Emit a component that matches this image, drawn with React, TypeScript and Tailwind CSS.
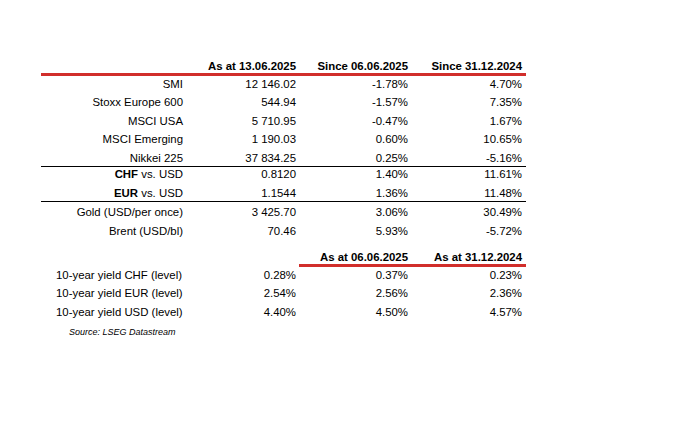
const rowsA = [
  { label: 'SMI', v: '12 146.02', w: '-1.78%', y: '4.70%' },
  { label: 'Stoxx Europe 600', v: '544.94', w: '-1.57%', y: '7.35%' },
  { label: 'MSCI USA', v: '5 710.95', w: '-0.47%', y: '1.67%' },
  { label: 'MSCI Emerging', v: '1 190.03', w: '0.60%', y: '10.65%' },
  { label: 'Nikkei 225', v: '37 834.25', w: '0.25%', y: '-5.16%' },
]

const rowsB = [
  { cur: 'CHF', v: '0.8120', w: '1.40%', y: '11.61%' },
  { cur: 'EUR', v: '1.1544', w: '1.36%', y: '11.48%' },
]

const rowsC = [
  { label: 'Gold (USD/per once)', v: '3 425.70', w: '3.06%', y: '30.49%' },
  { label: 'Brent (USD/bl)', v: '70.46', w: '5.93%', y: '-5.72%' },
]

const yields = [
  { label: '10-year yield CHF (level)', v: '0.28%', w: '0.37%', y: '0.23%' },
  { label: '10-year yield EUR (level)', v: '2.54%', w: '2.56%', y: '2.36%' },
  { label: '10-year yield USD (level)', v: '4.40%', w: '4.50%', y: '4.57%' },
]

const grid = 'grid grid-cols-[142px_113px_112px_118px]'

function Row({
  label,
  v,
  w,
  y,
  last = false,
  left = false,
}: {
  label: React.ReactNode
  v: string
  w: string
  y: string
  last?: boolean
  left?: boolean
}) {
  return (
    <div className={`${grid} ${last ? 'h-[16.5px] border-b border-black' : 'h-[18.5px]'} pt-[2.5px] leading-[11px]`}>
      <div className={left ? 'pl-[15px] text-left' : 'text-right'}>{label}</div>
      <div className="text-right">{v}</div>
      <div className="text-right">{w}</div>
      <div className="pr-[4px] text-right">{y}</div>
    </div>
  )
}

export default function App() {
  return (
    <div className="h-[438px] w-[680px] bg-white pt-[59px] font-['Liberation_Sans',Arial,sans-serif] text-[11.4px] text-black">
      <div className="ml-[41px] w-[485px]">
        {/* top header */}
        <div className={`${grid} h-[17px] border-b-[3px] border-[#d12e2b] pt-[2px] font-bold leading-[11px]`}>
          <div />
          <div className="text-right">As at 13.06.2025</div>
          <div className="text-right">Since 06.06.2025</div>
          <div className="pr-[4px] text-right">Since 31.12.2024</div>
        </div>

        {rowsA.map((r, i) => (
          <Row key={r.label} label={r.label} v={r.v} w={r.w} y={r.y} last={i === rowsA.length - 1} />
        ))}
        {rowsB.map((r, i) => (
          <Row
            key={r.cur}
            label={
              <>
                <span className="font-bold">{r.cur}</span> vs. USD
              </>
            }
            v={r.v}
            w={r.w}
            y={r.y}
            last={i === rowsB.length - 1}
          />
        ))}
        <div className="pt-[3px]">
          {rowsC.map((r) => (
            <Row key={r.label} label={r.label} v={r.v} w={r.w} y={r.y} />
          ))}
        </div>

        {/* yields header */}
        <div className={`${grid} mt-[8.5px] font-bold leading-[11px]`}>
          <div />
          <div />
          <div className="col-span-2 ml-[3px] grid h-[17px] grid-cols-[109px_118px] border-b-[3px] border-[#d12e2b] pt-[2px]">
            <div className="text-right">As at 06.06.2025</div>
            <div className="pr-[4px] text-right">As at 31.12.2024</div>
          </div>
        </div>

        {yields.map((r) => (
          <Row key={r.label} label={r.label} v={r.v} w={r.w} y={r.y} left />
        ))}

        <div className="pl-[28px] pt-[4px] text-[9px] italic leading-[10px]">Source: LSEG Datastream</div>
      </div>
    </div>
  )
}
